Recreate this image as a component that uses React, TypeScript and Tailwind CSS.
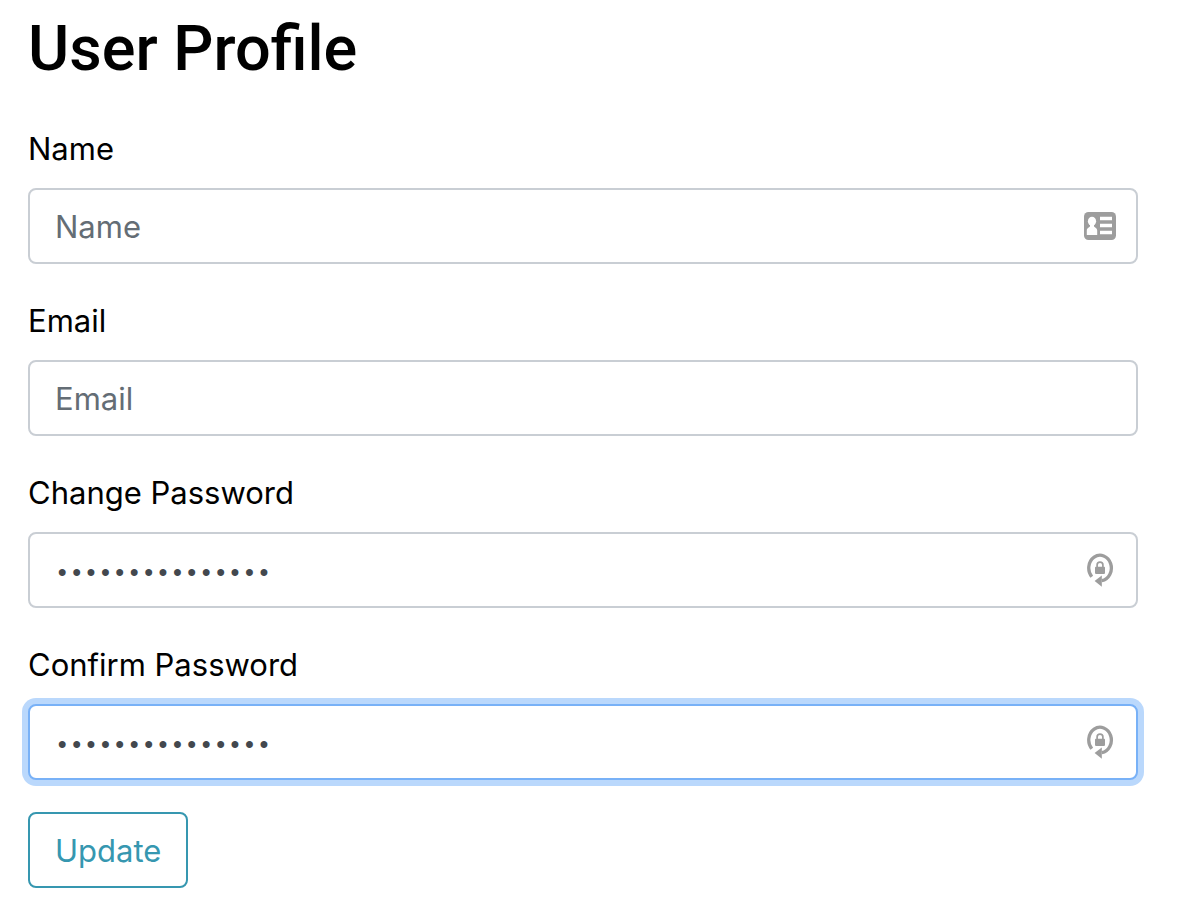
import { useState } from "react";
import type { ComponentType, InputHTMLAttributes } from "react";

function ContactCardIcon() {
  return (
    <svg viewBox="0 0 32 28" className="h-7 w-8" aria-hidden="true">
      <rect width="32" height="28" rx="4.500" fill="#9d9d9d" />
      <ellipse cx="8" cy="9.300" rx="4.100" ry="4.600" fill="#fff" />
      <path d="M6 12h4v2c0 1.500 3.200 1.500 3.200 4.500V23H2.800v-4.500C2.800 15.500 6 15.500 6 14z" fill="#fff" />
      <path d="M16 6.500h12M16 13.500h12M16 20.500h12" stroke="#fff" strokeWidth="3.400" />
    </svg>
  );
}

function PasswordResetIcon() {
  return (
    <svg viewBox="0 0 32 34" className="h-[34px] w-8" aria-hidden="true">
      <path d="M7.800 23.800A11.300 12.800 0 1 1 17.800 27.700" fill="none" stroke="#9d9d9d" strokeWidth="3.300" />
      <path d="M10.600 28L17.800 22.500V33.700z" fill="#9d9d9d" />
      <rect x="11" y="13.700" width="10" height="7.200" rx="0.800" fill="#9d9d9d" />
      <path d="M13.100 14.500v-2.500a2.900 2.900 0 0 1 5.800 0v2.500" fill="none" stroke="#9d9d9d" strokeWidth="1.700" />
    </svg>
  );
}

type FieldProps = InputHTMLAttributes<HTMLInputElement> & {
  id: string;
  label: string;
  icon?: ComponentType;
};

function Field({ id, label, icon: Icon, type = "text", ...rest }: FieldProps) {
  const font =
    type === "password" ? "pt-2 font-['Liberation_Mono',monospace] text-[24px] font-bold" : "text-[31px]";
  return (
    <div className="flex flex-col gap-3.5">
      <label htmlFor={id} className="self-start text-[31px] leading-[50px]">
        {label}
      </label>
      <div className="relative">
        <input
          id={id}
          type={type}
          className={`block h-19 w-full rounded-lg border-2 border-[#c9ced4] bg-white pr-18 pl-[25px] text-[#43484e] caret-transparent outline-none placeholder:text-[#646d75] focus:border-[#78b1f7] focus:ring-6 focus:ring-[#bad8fc] ${font}`}
          {...rest}
        />
        {Icon && (
          <span className="pointer-events-none absolute inset-y-0 right-[22px] flex items-center">
            <Icon />
          </span>
        )}
      </div>
    </div>
  );
}

export default function App() {
  const [password, setPassword] = useState("correcthorse123");
  const [confirmation, setConfirmation] = useState("correcthorse123");

  return (
    <main className="bg-white pt-2 pr-14 pb-9 pl-7 font-['Inter','Liberation_Sans',sans-serif] text-black">
      <h1 className="mb-[34px] font-['Roboto','Inter',sans-serif] text-[63px] leading-[82px] font-medium">
        User Profile
      </h1>
      <form className="flex flex-col gap-8" onSubmit={(event) => event.preventDefault()}>
        <Field id="name" label="Name" placeholder="Name" icon={ContactCardIcon} />
        <Field id="email" label="Email" type="email" placeholder="Email" />
        <Field
          id="password"
          label="Change Password"
          type="password"
          value={password}
          onChange={(event) => setPassword(event.target.value)}
          icon={PasswordResetIcon}
        />
        <Field
          id="confirm-password"
          label="Confirm Password"
          type="password"
          value={confirmation}
          onChange={(event) => setConfirmation(event.target.value)}
          icon={PasswordResetIcon}
          autoFocus
        />
        <button
          type="submit"
          className="h-19 self-start rounded-lg border-2 border-[#3697b0] px-[25px] pt-0.5 text-[31px] text-[#3697b0]"
        >
          Update
        </button>
      </form>
    </main>
  );
}
